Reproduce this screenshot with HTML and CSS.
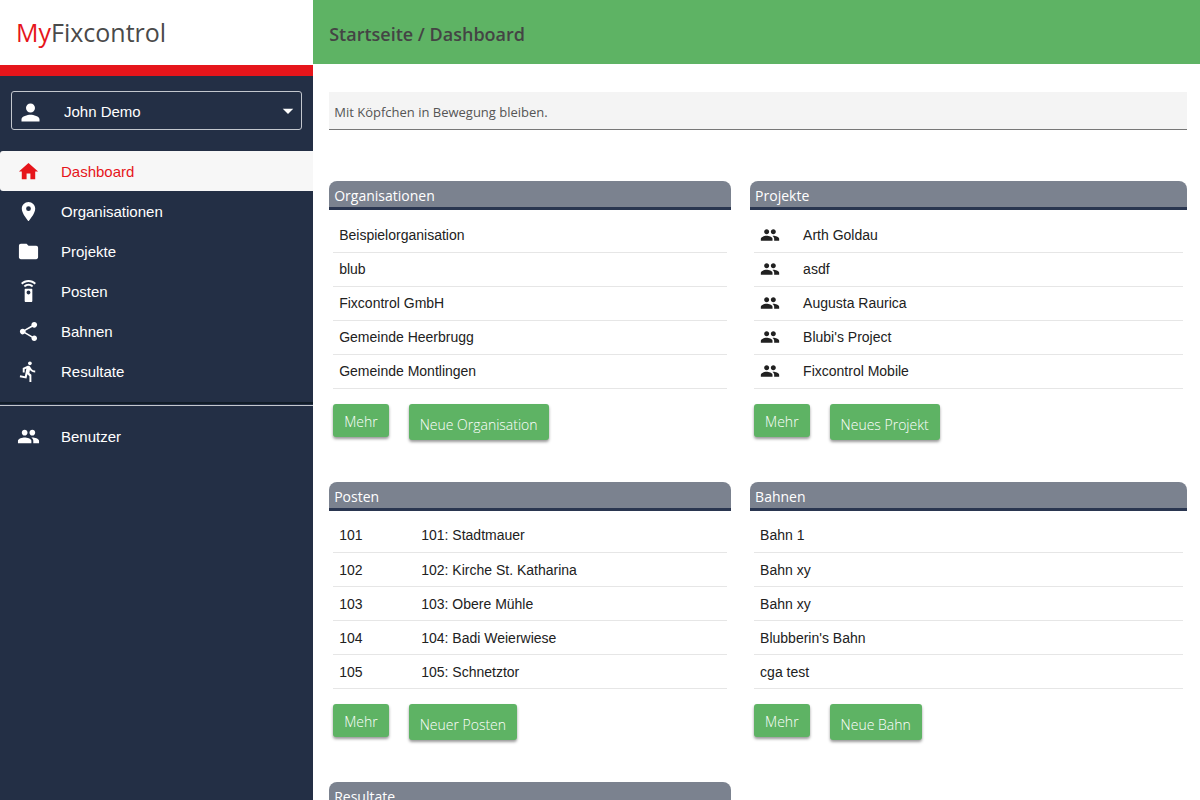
FILE: index.html
```html
<!DOCTYPE html>
<html lang="de">
<head>
<meta charset="utf-8">
<meta name="viewport" content="width=device-width, initial-scale=1">
<title>MyFixcontrol – Dashboard</title>
<link rel="stylesheet" href="styles.css">
</head>
<body>
<svg class="sprite" aria-hidden="true">
  <symbol id="person" viewBox="0 0 24 24"><path d="M12 12c2.210 0 4-1.790 4-4s-1.790-4-4-4-4 1.790-4 4 1.790 4 4 4zm0 2c-2.670 0-8 1.340-8 4v2h16v-2c0-2.660-5.330-4-8-4z"/></symbol>
  <symbol id="caret" viewBox="0 0 24 24"><path d="M5 9l7 7 7-7z"/></symbol>
  <symbol id="home" viewBox="0 0 24 24"><path d="M10 20v-6h4v6h5v-8h3L12 3 2 12h3v8z"/></symbol>
  <symbol id="place" viewBox="0 0 24 24"><path d="M12 2C8.130 2 5 5.130 5 9c0 5.250 7 13 7 13s7-7.750 7-13c0-3.870-3.130-7-7-7zm0 9.500a2.500 2.500 0 0 1 0-5 2.500 2.500 0 0 1 0 5z"/></symbol>
  <symbol id="folder" viewBox="0 0 24 24"><path d="M10 4H4c-1.100 0-1.990.9-1.990 2L2 18c0 1.100.9 2 2 2h16c1.100 0 2-.9 2-2V8c0-1.100-.9-2-2-2h-8l-2-2z"/></symbol>
  <symbol id="remote" viewBox="0 0 24 24"><path d="M15 9H9c-.55 0-1 .45-1 1v12c0 .55.45 1 1 1h6c.55 0 1-.45 1-1V10c0-.55-.45-1-1-1zm-3 6c-1.100 0-2-.9-2-2s.9-2 2-2 2 .9 2 2-.9 2-2 2zM7.050 6.050l1.410 1.410C9.370 6.560 10.620 6 12 6s2.630.56 3.540 1.460l1.410-1.410C15.680 4.780 13.930 4 12 4s-3.680.78-4.950 2.050zM12 0C8.960 0 6.210 1.230 4.220 3.220l1.410 1.410C7.260 3.010 9.510 2 12 2s4.740 1.010 6.360 2.640l1.410-1.410C17.790 1.230 15.040 0 12 0z"/></symbol>
  <symbol id="share" viewBox="0 0 24 24"><path d="M18 16.080c-.76 0-1.440.3-1.960.77L8.910 12.700c.05-.23.09-.46.09-.7s-.04-.47-.09-.7l7.050-4.110c.54.5 1.250.81 2.040.81 1.660 0 3-1.340 3-3s-1.340-3-3-3-3 1.340-3 3c0 .24.04.47.09.7L8.040 9.810C7.500 9.310 6.790 9 6 9c-1.660 0-3 1.340-3 3s1.340 3 3 3c.79 0 1.500-.31 2.040-.81l7.120 4.160c-.05.21-.08.43-.08.65 0 1.610 1.310 2.920 2.920 2.920s2.920-1.310 2.920-2.920-1.310-2.920-2.920-2.920z"/></symbol>
  <symbol id="run" viewBox="0 0 24 24"><path d="M13.490 5.480c1.100 0 2-.9 2-2s-.9-2-2-2-2 .9-2 2 .9 2 2 2zm-3.600 13.900l1-4.400 2.100 2v6h2v-7.500l-2.100-2 .6-3c1.300 1.500 3.300 2.500 5.500 2.500v-2c-1.900 0-3.500-1-4.300-2.400l-1-1.600c-.4-.6-1-1-1.700-1-.3 0-.5.1-.8.1l-5.200 2.200v4.700h2v-3.400l1.800-.7-1.600 8.100-4.900-1-.4 2 7 1.400z"/></symbol>
  <symbol id="people" viewBox="0 0 24 24"><path d="M16 11c1.660 0 2.990-1.340 2.990-3S17.660 5 16 5s-3 1.340-3 3 1.340 3 3 3zm-8 0c1.660 0 2.990-1.340 2.990-3S9.660 5 8 5 5 6.340 5 8s1.340 3 3 3zm0 2c-2.330 0-7 1.170-7 3.500V19h14v-2.500C15 14.170 10.330 13 8 13zm8 0c-.29 0-.62.02-.97.05 1.160.84 1.970 1.970 1.970 3.450V19h6v-2.500c0-2.330-4.670-3.500-7-3.500z"/></symbol>
</svg>
<div class="app">
  <aside class="sidebar">
    <div class="brand"><span class="brand-accent">My</span>Fixcontrol</div>
    <div class="user">
      <svg class="icon-user"><use href="#person"/></svg>
      <select class="user-select" aria-label="Benutzerkonto"><option>John Demo</option></select>
      <svg class="caret"><use href="#caret"/></svg>
    </div>
    <nav class="nav">
      <a class="nav-item active" href="#" aria-current="page"><svg class="icon"><use href="#home"/></svg>Dashboard</a>
      <a class="nav-item" href="#"><svg class="icon"><use href="#place"/></svg>Organisationen</a>
      <a class="nav-item" href="#"><svg class="icon"><use href="#folder"/></svg>Projekte</a>
      <a class="nav-item" href="#"><svg class="icon"><use href="#remote"/></svg>Posten</a>
      <a class="nav-item" href="#"><svg class="icon"><use href="#share"/></svg>Bahnen</a>
      <a class="nav-item" href="#"><svg class="icon"><use href="#run"/></svg>Resultate</a>
      <hr class="nav-divider">
      <a class="nav-item" href="#"><svg class="icon"><use href="#people"/></svg>Benutzer</a>
    </nav>
  </aside>
  <div class="page">
    <header class="topbar"><h1 class="title">Startseite / Dashboard</h1></header>
    <main class="content">
      <p class="quote">Mit Köpfchen in Bewegung bleiben.</p>
      <div class="cards">
        <section class="card">
          <h2 class="card-title">Organisationen</h2>
          <div class="card-body">
            <table class="list">
              <tr><td>Beispielorganisation</td></tr>
              <tr><td>blub</td></tr>
              <tr><td>Fixcontrol GmbH</td></tr>
              <tr><td>Gemeinde Heerbrugg</td></tr>
              <tr><td>Gemeinde Montlingen</td></tr>
            </table>
            <div class="actions">
              <button class="btn" type="button">Mehr</button>
              <button class="btn btn-new" type="button">Neue Organisation</button>
            </div>
          </div>
        </section>
        <section class="card">
          <h2 class="card-title">Projekte</h2>
          <div class="card-body">
            <table class="list">
              <tr><td class="col-icon"><svg class="icon-small"><use href="#people"/></svg></td><td>Arth Goldau</td></tr>
              <tr><td class="col-icon"><svg class="icon-small"><use href="#people"/></svg></td><td>asdf</td></tr>
              <tr><td class="col-icon"><svg class="icon-small"><use href="#people"/></svg></td><td>Augusta Raurica</td></tr>
              <tr><td class="col-icon"><svg class="icon-small"><use href="#people"/></svg></td><td>Blubi's Project</td></tr>
              <tr><td class="col-icon"><svg class="icon-small"><use href="#people"/></svg></td><td>Fixcontrol Mobile</td></tr>
            </table>
            <div class="actions">
              <button class="btn" type="button">Mehr</button>
              <button class="btn btn-new" type="button">Neues Projekt</button>
            </div>
          </div>
        </section>
        <section class="card">
          <h2 class="card-title">Posten</h2>
          <div class="card-body">
            <table class="list">
              <tr><td class="col-number">101</td><td>101: Stadtmauer</td></tr>
              <tr><td class="col-number">102</td><td>102: Kirche St. Katharina</td></tr>
              <tr><td class="col-number">103</td><td>103: Obere Mühle</td></tr>
              <tr><td class="col-number">104</td><td>104: Badi Weierwiese</td></tr>
              <tr><td class="col-number">105</td><td>105: Schnetztor</td></tr>
            </table>
            <div class="actions">
              <button class="btn" type="button">Mehr</button>
              <button class="btn btn-new" type="button">Neuer Posten</button>
            </div>
          </div>
        </section>
        <section class="card">
          <h2 class="card-title">Bahnen</h2>
          <div class="card-body">
            <table class="list">
              <tr><td>Bahn 1</td></tr>
              <tr><td>Bahn xy</td></tr>
              <tr><td>Bahn xy</td></tr>
              <tr><td>Blubberin's Bahn</td></tr>
              <tr><td>cga test</td></tr>
            </table>
            <div class="actions">
              <button class="btn" type="button">Mehr</button>
              <button class="btn btn-new" type="button">Neue Bahn</button>
            </div>
          </div>
        </section>
        <section class="card">
          <h2 class="card-title">Resultate</h2>
        </section>
      </div>
    </main>
  </div>
</div>
</body>
</html>
```
FILE: styles.css
```css
:root {
  --navy: #232f45;
  --green: #5eb364;
  --red: #e6151b;
  --text-font: "Liberation Sans", Arial, sans-serif;
  --head-font: "Segoe UI", "Open Sans", sans-serif;
}

* { box-sizing: border-box; }

body {
  margin: 0;
  background: #fff;
  color: #212121;
  font-family: var(--text-font);
  font-size: 14px;
}

.sprite { display: none; }

.app { display: flex; height: 100vh; }

.sidebar {
  flex: none;
  width: 26.1%;
  background: var(--navy);
  color: #fff;
}

.brand {
  display: flex;
  align-items: center;
  height: 76px;
  padding: 0 16px 2px;
  border-bottom: 11px solid var(--red);
  background: #fff;
  color: #4a4a4a;
  font-family: var(--head-font);
  font-size: 25px;
}

.brand-accent { color: var(--red); }

.user {
  display: flex;
  align-items: center;
  height: 39px;
  margin: 15px 11px 21px;
  padding: 0 5px;
  border: 1px solid #c3c7ce;
  border-radius: 3px;
}

.icon { flex: none; width: 23px; height: 23px; fill: currentColor; }

.icon-user { flex: none; width: 27px; height: 27px; margin-top: 3px; fill: currentColor; }

.caret { flex: none; width: 18px; height: 18px; margin-right: -1px; fill: currentColor; pointer-events: none; }

.user-select {
  flex: 1;
  height: 100%;
  padding: 2px 0 0 20px;
  border: 0;
  appearance: none;
  background: var(--navy);
  color: #fff;
  font-family: var(--text-font);
  font-size: 15px;
}

.nav-item {
  display: flex;
  align-items: center;
  gap: 21px;
  height: 40px;
  padding: 0 17px;
  color: #fff;
  font-size: 15px;
  text-decoration: none;
}

.nav-item.active {
  border-radius: 3px 0 0 3px;
  background: #f7f7f7;
  color: var(--red);
}

.nav-divider {
  height: 4px;
  margin: 11px 0 10px;
  border: 0;
  border-top: 2px solid #101c28;
  border-bottom: 1px solid #c3c7ce;
}

.page {
  display: flex;
  flex: 1;
  flex-direction: column;
  min-width: 0;
}

.topbar {
  display: flex;
  flex: none;
  align-items: center;
  height: 64px;
  padding: 4px 16px 0;
  background: var(--green);
}

.title {
  margin: 0;
  color: #444;
  font-family: var(--head-font);
  font-size: 18px;
  font-weight: 600;
}

.content {
  flex: 1;
  overflow-y: auto;
  padding: 28px 13px 28px 16px;
  scrollbar-width: none;
}

.quote {
  margin: 0 0 51px;
  padding: 10px 5px 7px;
  border-bottom: 1px solid #777;
  background: #f4f4f4;
  color: #555;
  font-family: var(--head-font);
  font-size: 13px;
  line-height: 20px;
}

.cards {
  display: grid;
  grid-template-columns: 402fr 437fr;
  gap: 42px 19px;
}

.card-title {
  margin: 0;
  padding: 3px 5px 0;
  border-bottom: 3px solid #2a3650;
  border-radius: 8px 8px 0 0;
  background: #7b828f;
  color: #fff;
  font-family: var(--head-font);
  font-size: 14px;
  font-weight: 400;
  line-height: 23px;
}

.card-body { padding: 8px 4px 0; }

.list { width: 100%; border-collapse: collapse; }

.list tr { height: 34px; border-bottom: 1px solid #e6e6e6; }

.list td { padding: 0 6px; }

.list .col-icon { width: 43px; }

.list .col-number { width: 82px; }

.icon-small { display: block; width: 20px; height: 20px; fill: #212121; }

.actions {
  display: flex;
  align-items: flex-start;
  gap: 20px;
  margin-top: 15px;
}

.btn {
  padding: 7px 11px 5px;
  border: 0;
  border-radius: 3px;
  background: var(--green);
  box-shadow: 0 2px 3px rgba(0, 0, 0, .4);
  color: #fff;
  font-family: var(--head-font);
  font-size: 14px;
  font-weight: 300;
  line-height: 21px;
}

.btn-new { padding: 10px 11px 5px; }
```
